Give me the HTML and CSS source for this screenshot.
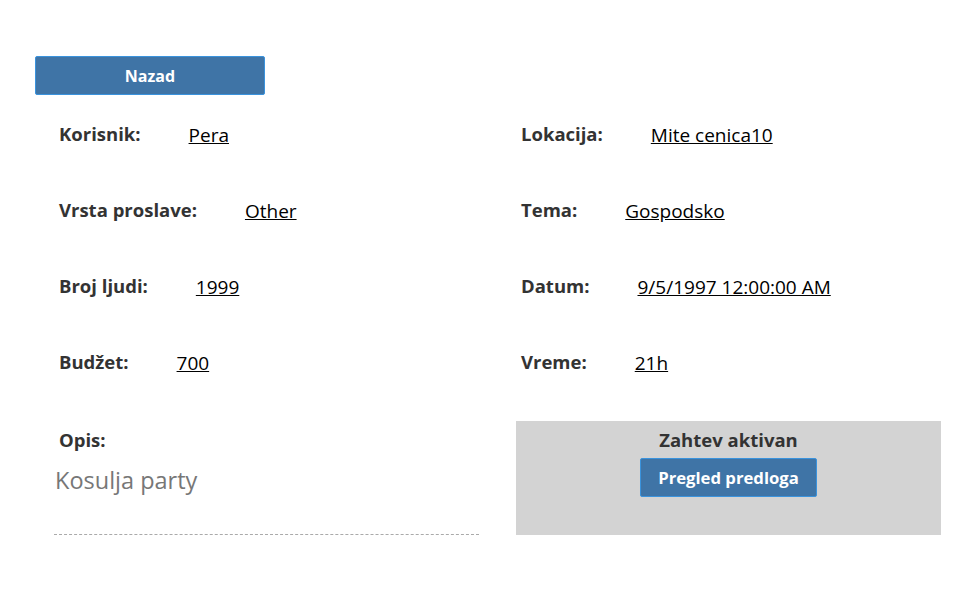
FILE: index.html
```html
<!DOCTYPE html>
<html>
<head>
<meta charset="utf-8">
<link rel="stylesheet" href="styles.css">
</head>
<body>
<div class="page">
  <button class="btn btn-back">Nazad</button>
  <div class="details">
    <div class="field"><span class="label">Korisnik:</span><a class="value">Pera</a></div>
    <div class="field"><span class="label">Lokacija:</span><a class="value">Mite cenica10</a></div>
    <div class="field"><span class="label">Vrsta proslave:</span><a class="value">Other</a></div>
    <div class="field"><span class="label">Tema:</span><a class="value">Gospodsko</a></div>
    <div class="field"><span class="label">Broj ljudi:</span><a class="value">1999</a></div>
    <div class="field"><span class="label">Datum:</span><a class="value">9/5/1997 12:00:00 AM</a></div>
    <div class="field"><span class="label">Budžet:</span><a class="value">700</a></div>
    <div class="field"><span class="label">Vreme:</span><a class="value">21h</a></div>
    <div class="desc">
      <span class="label">Opis:</span>
      <div class="desc-text">Kosulja party</div>
    </div>
    <div class="status">
      <div class="status-title">Zahtev aktivan</div>
      <button class="btn btn-review">Pregled predloga</button>
    </div>
  </div>
</div>
</body>
</html>
```

FILE: styles.css
```css
html, body {
  margin: 0;
  padding: 0;
  background: #ffffff;
}
body {
  font-family: "Open Sans", "Noto Sans", sans-serif;
  color: #333333;
}
.page {
  padding: 56px 0 0 35px;
}
.btn {
  display: block;
  background: #3f74a6;
  color: #ffffff;
  border: 1px solid #3a93dd;
  border-radius: 2px;
  font-family: "Open Sans", sans-serif;
  font-weight: 700;
  font-size: 16px;
  padding: 0;
  height: 39px;
}
.btn-back {
  width: 230px;
  margin-bottom: 22px;
}
.details {
  display: grid;
  grid-template-columns: 425px 425px;
  column-gap: 37px;
  margin-left: 19px;
}
.field {
  display: flex;
  align-items: flex-start;
  height: 76px;
  padding-left: 5px;
  padding-top: 4px;
  box-sizing: border-box;
}
.label {
  display: block;
  font-weight: 700;
  font-size: 18.5px;
  line-height: 25px;
  color: #333333;
}
.value {
  margin-left: 48px;
  font-size: 19px;
  line-height: 25px;
  padding-top: 2px;
  color: #000000;
  text-decoration: underline;
}
.desc {
  height: 114px;
  box-sizing: border-box;
  border-bottom: 1px dashed #aaaaaa;
  padding: 6px 0 0 5px;
}
.desc-text {
  margin-left: -4px;
  margin-top: 13px;
  font-size: 23.5px;
  line-height: 30px;
  color: #777777;
}
.status {
  height: 114px;
  box-sizing: border-box;
  background: #d3d3d3;
  display: flex;
  flex-direction: column;
  align-items: center;
  padding-top: 6px;
}
.status-title {
  font-weight: 700;
  font-size: 18.5px;
  line-height: 25px;
  color: #333333;
  margin-bottom: 6px;
}
.btn-review {
  width: 177px;
  font-size: 16.7px;
}
```
